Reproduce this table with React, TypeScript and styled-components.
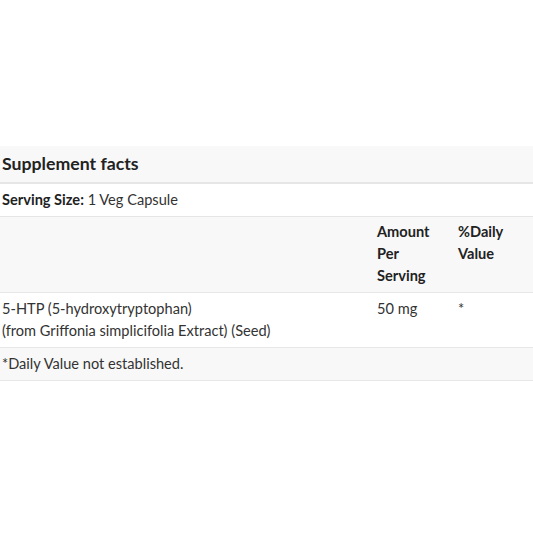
import React from 'react';
import styled, { createGlobalStyle } from 'styled-components';

const GlobalStyle = createGlobalStyle`
  body {
    margin: 0;
    background: #ffffff;
    font-family: Lato, "Open Sans", sans-serif;
    color: #333333;
  }
`;

interface Ingredient {
  name: string[];
  amount: string;
  daily: string;
}

const ingredients: Ingredient[] = [
  {
    name: ['5-HTP (5-hydroxytryptophan)', '(from Griffonia simplicifolia Extract) (Seed)'],
    amount: '50 mg',
    daily: '*',
  },
];

const App: React.FC = () => {
  return (
    <>
      <GlobalStyle />
      <Page>
        <Facts>
          <TitleRow>
            <Title>Supplement facts</Title>
          </TitleRow>
          <Row>
            <Cell>
              <strong>Serving Size:</strong> 1 Veg Capsule
            </Cell>
          </Row>
          <HeaderRow>
            <Cell />
            <HeadCell>
              Amount
              <br />
              Per
              <br />
              Serving
            </HeadCell>
            <HeadCell>
              %Daily
              <br />
              Value
            </HeadCell>
          </HeaderRow>
          {ingredients.map((item) => (
            <GridRow key={item.name[0]}>
              <Cell>
                {item.name.map((line) => (
                  <div key={line}>{line}</div>
                ))}
              </Cell>
              <Cell>{item.amount}</Cell>
              <Cell>{item.daily}</Cell>
            </GridRow>
          ))}
          <Row $shaded>
            <Cell>*Daily Value not established.</Cell>
          </Row>
        </Facts>
      </Page>
    </>
  );
};

export default App;

const Page = styled.div`
  width: 533px;
  height: 533px;
  padding-top: 146px;
  box-sizing: border-box;
`;

const Facts = styled.div`
  display: flex;
  flex-direction: column;
  font-size: 14.6px;
  line-height: 22px;
`;

const TitleRow = styled.div`
  background: #f8f8f8;
  padding: 6px 2px 7px;
  border-bottom: 2px solid #e6e6e6;
`;

const Title = styled.h2`
  margin: 0;
  font-size: 17.7px;
  font-weight: 700;
  line-height: 23px;
  color: #222222;
`;

const Row = styled.div<{ $shaded?: boolean }>`
  background: ${(p) => (p.$shaded ? '#f8f8f8' : '#ffffff')};
  padding: 5px 2px;
  border-bottom: 1px solid #e6e6e6;

  strong {
    font-weight: 700;
    color: #222222;
  }
`;

const GridRow = styled.div<{ $shaded?: boolean }>`
  display: grid;
  grid-template-columns: 375px 81px 1fr;
  background: ${(p) => (p.$shaded ? '#f8f8f8' : '#ffffff')};
  padding: 5px 0 5px 2px;
  border-bottom: 1px solid #e6e6e6;
`;

const HeaderRow = styled(GridRow).attrs({ $shaded: true })`
  padding-top: 4px;
`;

const Cell = styled.div`
  min-height: 22px;
`;

const HeadCell = styled.div`
  font-weight: 700;
  color: #222222;
`;
